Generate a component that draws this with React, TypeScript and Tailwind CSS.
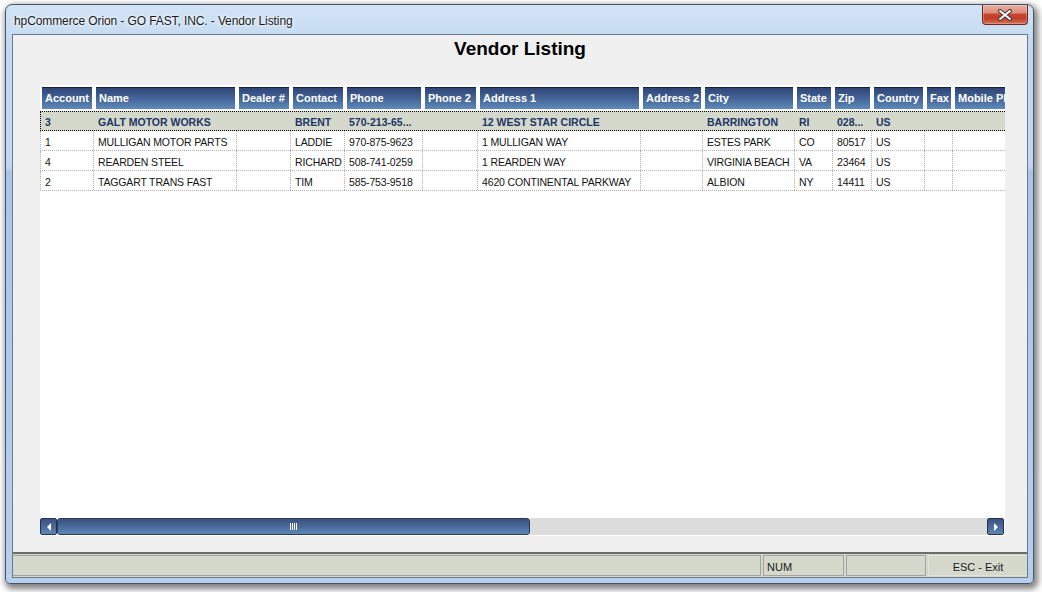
import React from "react";

type Col = { h: string; w: string };

const cols: Col[] = [
  { h: "Account", w: "w-[54px]" },
  { h: "Name", w: "w-[143px]" },
  { h: "Dealer #", w: "w-[54px]" },
  { h: "Contact", w: "w-[54px]" },
  { h: "Phone", w: "w-[78px]" },
  { h: "Phone 2", w: "w-[55px]" },
  { h: "Address 1", w: "w-[163px]" },
  { h: "Address 2", w: "w-[62px]" },
  { h: "City", w: "w-[92px]" },
  { h: "State", w: "w-[38px]" },
  { h: "Zip", w: "w-[39px]" },
  { h: "Country", w: "w-[53px]" },
  { h: "Fax", w: "w-[28px]" },
  { h: "Mobile Phone", w: "w-[80px]" },
];

const rows: string[][] = [
  ["3", "GALT MOTOR WORKS", "", "BRENT", "570-213-65...", "", "12 WEST STAR CIRCLE", "", "BARRINGTON", "RI", "028...", "US", "", ""],
  ["1", "MULLIGAN MOTOR PARTS", "", "LADDIE", "970-875-9623", "", "1 MULLIGAN WAY", "", "ESTES PARK", "CO", "80517", "US", "", ""],
  ["4", "REARDEN STEEL", "", "RICHARD", "508-741-0259", "", "1 REARDEN WAY", "", "VIRGINIA BEACH", "VA", "23464", "US", "", ""],
  ["2", "TAGGART TRANS FAST", "", "TIM", "585-753-9518", "", "4620 CONTINENTAL PARKWAY", "", "ALBION", "NY", "14411", "US", "", ""],
];

function CloseButton() {
  return (
    <div className="absolute top-[0px] right-[5px] w-[46px] h-[20px] rounded-b-[4px] border border-t-0 border-[#6a2a20] bg-[linear-gradient(to_bottom,#eab0a2_0%,#df8d7b_40%,#c7442e_50%,#c23f29_70%,#d8705a_100%)] flex items-center justify-center shadow-[inset_0_0_0_1px_rgba(255,255,255,0.25)]">
      <svg width="16" height="12" viewBox="0 0 16 12">
        <path d="M3 2 L13 10 M13 2 L3 10" stroke="#3a3a3a" strokeWidth="4" strokeLinecap="round" fill="none" />
        <path d="M3 2 L13 10 M13 2 L3 10" stroke="#ffffff" strokeWidth="2" strokeLinecap="round" fill="none" />
      </svg>
    </div>
  );
}

function ScrollButton({ dir }: { dir: "left" | "right" }) {
  return (
    <div className="w-[17px] h-[17px] rounded-[2px] border border-[#27324a] bg-[linear-gradient(to_bottom,#3b5283_0%,#4a6a9a_50%,#5a87b4_100%)] flex items-center justify-center">
      <svg width="6" height="8" viewBox="0 0 6 8">
        {dir === "left" ? <path d="M5 0 L5 8 L1 4 Z" fill="#ffffff" /> : <path d="M1 0 L1 8 L5 4 Z" fill="#ffffff" />}
      </svg>
    </div>
  );
}

export default function App() {
  return (
    <div className="w-[1042px] h-[592px] bg-white pl-[5px] pt-[4px] overflow-hidden font-['Liberation_Sans',Arial,sans-serif]">
      <div className="relative w-[1029px] h-[580px] rounded-t-[7px] rounded-b-[5px] border border-[#46546a] bg-[linear-gradient(to_bottom,#d2e3f6_0px,#c3d9f1_40px,#c3d9f1_160px,#a9c6e8_168px,#b6cfec_100%)] shadow-[2px_3px_6px_2px_rgba(0,0,0,0.5)] flex flex-col pl-[6px] pr-[5px] pb-[5px]">
        <div className="h-[29px] flex items-center pl-[2px] pt-[3px] text-[12px] text-[#1a1a1a] tracking-[-0.1px] [text-shadow:0_0_6px_#ffffff,0_0_3px_#ffffff]">
          hpCommerce Orion - GO FAST, INC. - Vendor Listing
        </div>
        <CloseButton />
        <div className="flex-1 border border-[#6b7a8e] bg-[#f0f0f0] flex flex-col">
          <div className="h-[50px] pt-[3px] text-center text-[19px] leading-[22px] font-bold text-black">Vendor Listing</div>
          <div className="ml-[27px] w-[965px] h-[451px] bg-white flex flex-col overflow-hidden">
            <div className="flex-1 pt-[2px] overflow-hidden">
              <div className="flex h-[22px] w-max">
                {cols.map((c) => (
                  <div key={c.h} className={`${c.w} shrink-0 px-[2px] h-full`}>
                    <div className="h-full bg-[linear-gradient(to_bottom,#18223c_0px,#18223c_1px,#2f4576_1px,#46669a_55%,#5d89b7_100%)] text-white font-bold text-[11px] leading-[22px] pl-[3px] whitespace-nowrap overflow-hidden">
                      {c.h}
                    </div>
                  </div>
                ))}
              </div>
              <div className="mt-[2px] w-max">
                {rows.map((r, i) => {
                  const sel = i === 0;
                  return (
                    <div
                      key={i}
                      className={
                        sel
                          ? "flex h-[20px] bg-[#d4d9cc] border-y border-l border-dotted border-black text-[#1c3566] font-bold"
                          : "flex h-[20px] border-b border-l border-dotted border-[#b0b0b0] text-[#141414] tracking-[-0.15px]"
                      }
                    >
                      {r.map((v, j) => (
                        <div
                          key={j}
                          className={
                            (j === 0 ? "w-[53px] " : cols[j].w + " ") +
                            (sel ? "pt-[1px] " : "pt-[2px] border-r border-dotted border-[#b0b0b0] ") +
                            "shrink-0 text-[10.5px] leading-[19px] pl-[4px] whitespace-nowrap overflow-hidden"
                          }
                        >
                          {v}
                        </div>
                      ))}
                    </div>
                  );
                })}
              </div>
            </div>
            <div className="h-[17px] flex mb-[1px] pr-[1px]">
              <ScrollButton dir="left" />
              <div className="w-[473px] h-[17px] rounded-[3px] border border-[#2a3850] bg-[linear-gradient(to_bottom,#3a5080_0%,#4a6a9b_50%,#5b88b5_100%)] flex items-center justify-center">
                <div className="flex gap-[1px] h-[7px]">
                  <div className="w-[1px] bg-white" />
                  <div className="w-[1px] bg-white" />
                  <div className="w-[1px] bg-white" />
                  <div className="w-[1px] bg-white" />
                </div>
              </div>
              <div className="flex-1 bg-[#dcdcdc]" />
              <ScrollButton dir="right" />
            </div>
          </div>
          <div className="mt-[16px] border-t-2 border-[#6b6b6b] h-[25px] bg-[#d4d9cc] pt-[1px] pb-[1px] flex gap-[2px] text-[11px] text-[#1a1a1a]">
            <div className="w-[748px] border border-[#a3a3a3] border-l-0" />
            <div className="w-[81px] border border-[#a3a3a3] pl-[3px] pt-[2px] leading-[19px]">NUM</div>
            <div className="w-[80px] border border-[#a3a3a3]" />
            <div className="flex-1 border border-[#dfe3da] border-r-0 text-center pt-[2px] leading-[19px]">ESC - Exit</div>
          </div>
        </div>
      </div>
    </div>
  );
}
